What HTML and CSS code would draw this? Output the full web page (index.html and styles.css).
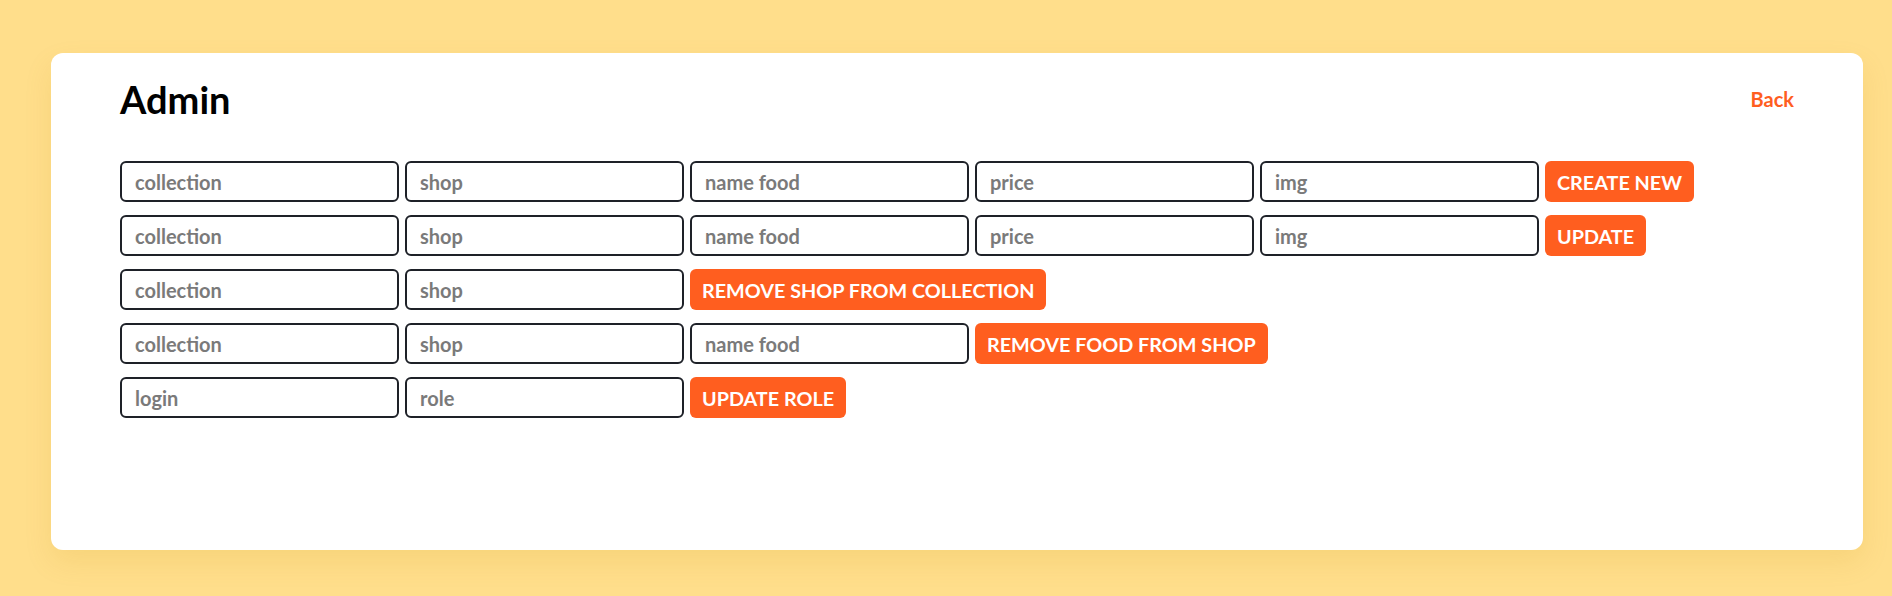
FILE: index.html
```html
<!DOCTYPE html>
<html lang="en">
<head>
<meta charset="utf-8">
<title>Admin</title>
<link rel="stylesheet" href="styles.css">
</head>
<body>
<main class="card">
  <header class="header">
    <h1 class="title">Admin</h1>
    <a class="back" href="#">Back</a>
  </header>
  <section class="forms">
    <form class="row">
      <input class="field" placeholder="collection">
      <input class="field" placeholder="shop">
      <input class="field" placeholder="name food">
      <input class="field" placeholder="price">
      <input class="field" placeholder="img">
      <button class="btn" type="button">Create new</button>
    </form>
    <form class="row">
      <input class="field" placeholder="collection">
      <input class="field" placeholder="shop">
      <input class="field" placeholder="name food">
      <input class="field" placeholder="price">
      <input class="field" placeholder="img">
      <button class="btn" type="button">Update</button>
    </form>
    <form class="row">
      <input class="field" placeholder="collection">
      <input class="field" placeholder="shop">
      <button class="btn" type="button">Remove shop from collection</button>
    </form>
    <form class="row">
      <input class="field" placeholder="collection">
      <input class="field" placeholder="shop">
      <input class="field" placeholder="name food">
      <button class="btn" type="button">Remove food from shop</button>
    </form>
    <form class="row">
      <input class="field" placeholder="login">
      <input class="field" placeholder="role">
      <button class="btn" type="button">Update role</button>
    </form>
  </section>
</main>
</body>
</html>
```

FILE: styles.css
```css
html, body {
  margin: 0;
  padding: 0;
}
body {
  background: #ffde8b;
  font-family: "Lato", "Liberation Sans", sans-serif;
  padding: 53px 29px 0 51px;
  height: 596px;
  box-sizing: border-box;
}
.card {
  width: 1812px;
  height: 497px;
  box-sizing: border-box;
  background: #ffffff;
  border-radius: 12px;
  box-shadow: 0 12px 28px rgba(190, 140, 0, 0.12);
  padding: 24px 69px 0 69px;
}
.header {
  display: flex;
  align-items: center;
  justify-content: space-between;
  height: 44px;
}
.title {
  margin: 0;
  font-size: 38px;
  line-height: 44px;
  font-weight: 700;
  color: #000000;
}
.back {
  font-size: 20px;
  font-weight: 700;
  color: #ff5e1f;
  text-decoration: none;
}
.forms {
  margin-top: 40px;
  display: flex;
  flex-direction: column;
  gap: 13px;
}
.row {
  display: flex;
  gap: 6px;
  margin: 0;
}
.field {
  width: 279px;
  height: 41px;
  box-sizing: border-box;
  border: 2px solid #1e2128;
  border-radius: 6px;
  padding: 0 13px;
  font-family: "Lato", "Liberation Sans", sans-serif;
  font-size: 20px;
  font-weight: 700;
  color: #222;
  background: #fff;
  outline: none;
}
.field::placeholder {
  color: #7a7a7a;
  opacity: 1;
}
.btn {
  height: 41px;
  box-sizing: border-box;
  border: none;
  border-radius: 6px;
  background: #ff5e1f;
  color: #ffffff;
  padding: 0 12px;
  font-family: "Lato", "Liberation Sans", sans-serif;
  font-size: 19.8px;
  font-weight: 700;
  text-transform: uppercase;
  cursor: pointer;
}
```
